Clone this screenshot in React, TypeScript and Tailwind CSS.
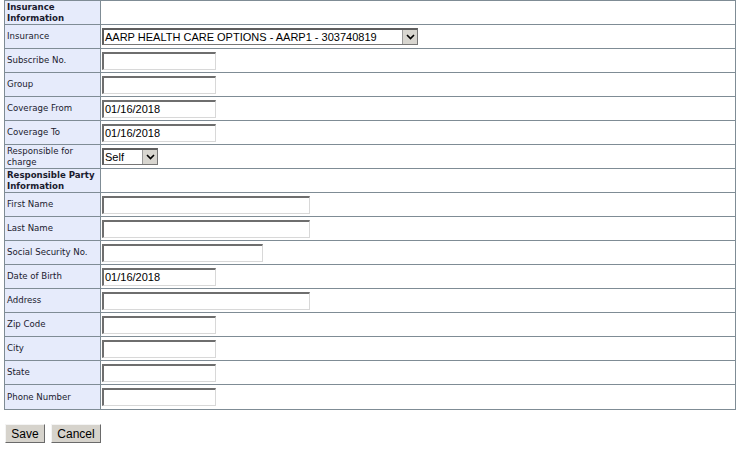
import React from 'react';

type Field = {
  label: string;
  kind: 'heading' | 'text' | 'select';
  value?: string;
  width?: string;
};

const rows: Field[] = [
  { label: 'Insurance Information', kind: 'heading' },
  { label: 'Insurance', kind: 'select', value: 'AARP HEALTH CARE OPTIONS - AARP1 - 303740819', width: 'w-[316px]' },
  { label: 'Subscribe No.', kind: 'text', width: 'w-[114px]' },
  { label: 'Group', kind: 'text', width: 'w-[114px]' },
  { label: 'Coverage From', kind: 'text', value: '01/16/2018', width: 'w-[114px]' },
  { label: 'Coverage To', kind: 'text', value: '01/16/2018', width: 'w-[114px]' },
  { label: 'Responsible for charge', kind: 'select', value: 'Self', width: 'w-[56px]' },
  { label: 'Responsible Party Information', kind: 'heading' },
  { label: 'First Name', kind: 'text', width: 'w-[208px]' },
  { label: 'Last Name', kind: 'text', width: 'w-[208px]' },
  { label: 'Social Security No.', kind: 'text', width: 'w-[161px]' },
  { label: 'Date of Birth', kind: 'text', value: '01/16/2018', width: 'w-[114px]' },
  { label: 'Address', kind: 'text', width: 'w-[208px]' },
  { label: 'Zip Code', kind: 'text', width: 'w-[114px]' },
  { label: 'City', kind: 'text', width: 'w-[114px]' },
  { label: 'State', kind: 'text', width: 'w-[114px]' },
  { label: 'Phone Number', kind: 'text', width: 'w-[114px]' },
];

const Chevron = () => (
  <svg width="9" height="6" viewBox="0 0 9 6">
    <path d="M1 1 L4.5 4.5 L8 1" fill="none" stroke="#000" strokeWidth="1.6" />
  </svg>
);

const TextBox: React.FC<{ value?: string; width?: string }> = ({ value, width }) => (
  <div
    className={`${width} h-[18px] bg-white border-t-2 border-l-2 border-t-[#6e6e6e] border-l-[#6e6e6e] border-b border-r border-b-[#d8d8d8] border-r-[#d8d8d8] flex items-center pl-[1px] text-[11px] leading-none text-black`}
  >
    {value}
  </div>
);

const SelectBox: React.FC<{ value?: string; width?: string }> = ({ value, width }) => (
  <div
    className={`${width} h-[17px] bg-white border border-[#767676] border-t-2 border-l-2 border-t-[#5e5e5e] border-l-[#5e5e5e] flex items-center text-[11px] leading-none text-black`}
  >
    <span className="flex-1 pl-[1px] whitespace-nowrap overflow-hidden">{value}</span>
    <span className="w-[15px] h-full bg-[#d8d6d0] border-l border-[#9a9a9a] flex items-center justify-center">
      <Chevron />
    </span>
  </div>
);

export default function App() {
  return (
    <div className="w-[743px] h-[454px] bg-white font-['Liberation_Sans',Arial,sans-serif]">
      <div className="ml-[4px] w-[732px] border border-[#7f8c95]">
        {rows.map((row, i) => (
          <div
            key={row.label}
            className={`flex h-[24px] ${i < rows.length - 1 ? 'border-b border-[#7f8c95]' : ''}`}
          >
            <div
              className={`w-[96px] shrink-0 bg-[#e6ebfb] border-r border-[#7f8c95] pl-[2px] flex items-center font-['DejaVu_Sans',Verdana,sans-serif] text-[8.6px] leading-[11px] text-[#1a1a2e] ${
                row.kind === 'heading' ? 'font-bold text-[#0f1530]' : ''
              }`}
            >
              {row.label}
            </div>
            <div className="flex-1 flex items-center pl-[1px]">
              {row.kind === 'text' && <TextBox value={row.value} width={row.width} />}
              {row.kind === 'select' && <SelectBox value={row.value} width={row.width} />}
            </div>
          </div>
        ))}
      </div>
      <div className="flex gap-[6px] ml-[5px] mt-[14px]">
        <button className="h-[19px] w-[40px] bg-[#d6d3cc] border border-t-[#f4f4f4] border-l-[#f4f4f4] border-b-[#6a6a6a] border-r-[#6a6a6a] text-[12px] leading-none text-black">
          Save
        </button>
        <button className="h-[19px] w-[50px] bg-[#d6d3cc] border border-t-[#f4f4f4] border-l-[#f4f4f4] border-b-[#6a6a6a] border-r-[#6a6a6a] text-[12px] leading-none text-black">
          Cancel
        </button>
      </div>
    </div>
  );
}
